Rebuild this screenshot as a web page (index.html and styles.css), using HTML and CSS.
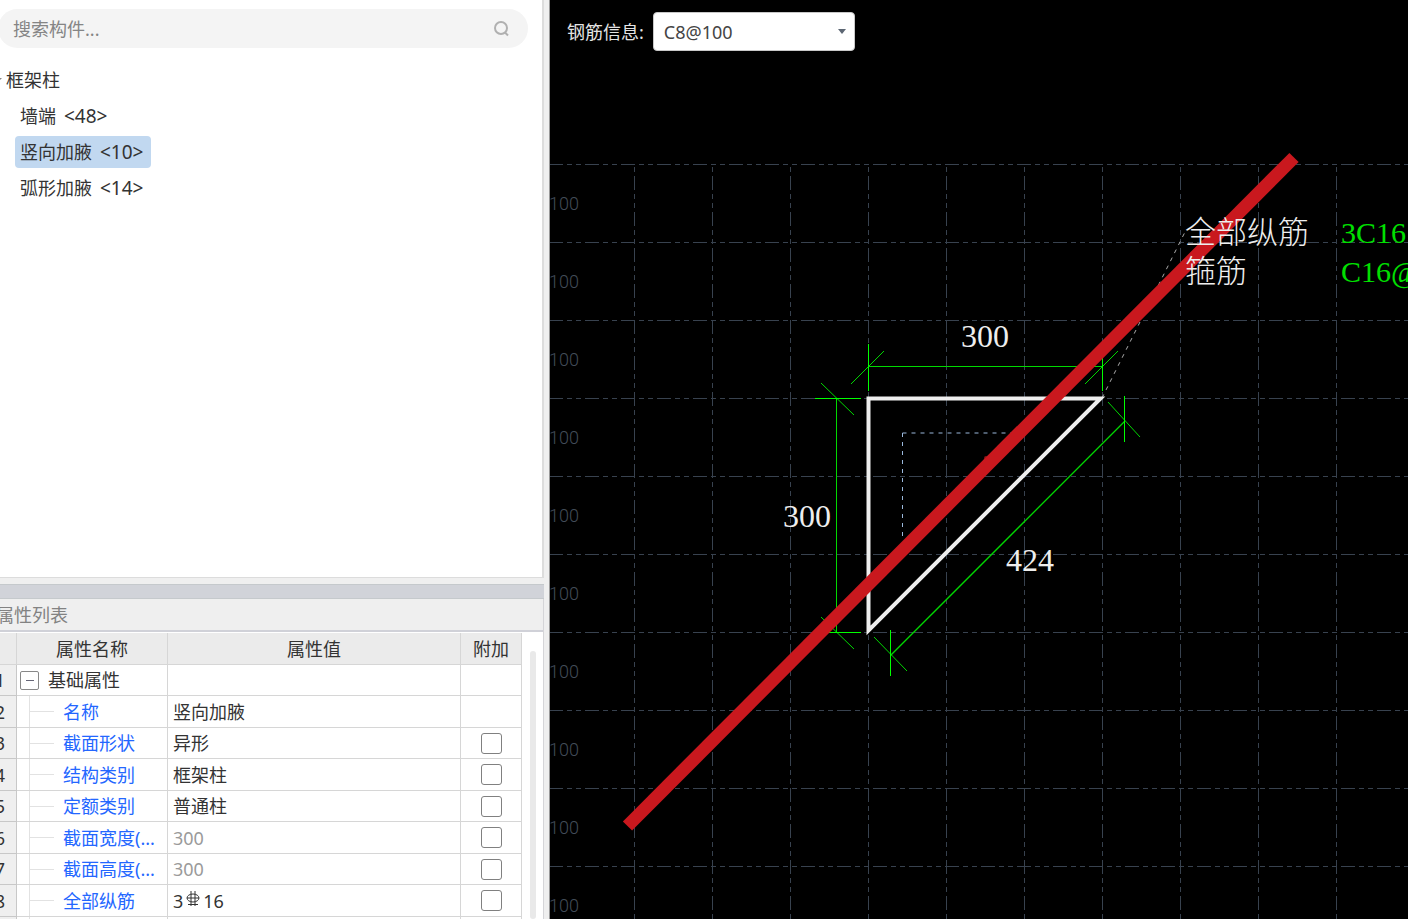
FILE: index.html
```html
<!DOCTYPE html>
<html lang="zh-CN">
<head>
<meta charset="utf-8">
<title>构件属性</title>
<link rel="stylesheet" href="styles.css">
</head>
<body>
<div class="app">
  <aside class="sidebar">
    <section class="components">
      <div class="search">
        <input class="search-input" type="search" placeholder="搜索构件..." aria-label="搜索构件">
        <svg class="search-icon" viewBox="0 0 18 18" aria-hidden="true"><circle cx="8" cy="8" r="6"/><path d="M12 12.500L15 15.500"/></svg>
      </div>
      <ul class="tree">
        <li><button class="node root" type="button"><svg class="arrow" viewBox="0 0 8 8" aria-hidden="true"><path d="M0 2h8L4 6z"/></svg>框架柱</button></li>
        <li><button class="node" type="button">墙端<span class="count">&lt;48&gt;</span></button></li>
        <li><button class="node selected" type="button">竖向加腋<span class="count">&lt;10&gt;</span></button></li>
        <li><button class="node" type="button">弧形加腋<span class="count">&lt;14&gt;</span></button></li>
      </ul>
    </section>
    <div class="splitter"></div>
    <section class="properties">
      <h2 class="title">属性列表</h2>
      <div class="table-area">
        <table class="grid">
          <colgroup><col class="c-num"><col class="c-name"><col class="c-value"><col class="c-extra"></colgroup>
          <thead>
            <tr><th></th><th>属性名称</th><th>属性值</th><th>附加</th></tr>
          </thead>
          <tbody>
            <tr><th>1</th><td class="group"><div class="group-head"><button class="toggle" type="button" aria-label="折叠"></button>基础属性</div></td><td></td><td></td></tr>
            <tr><th>2</th><td class="name">名称</td><td>竖向加腋</td><td></td></tr>
            <tr><th>3</th><td class="name">截面形状</td><td>异形</td><td class="extra"><input class="check" type="checkbox" aria-label="截面形状 附加"></td></tr>
            <tr><th>4</th><td class="name">结构类别</td><td>框架柱</td><td class="extra"><input class="check" type="checkbox" aria-label="结构类别 附加"></td></tr>
            <tr><th>5</th><td class="name">定额类别</td><td>普通柱</td><td class="extra"><input class="check" type="checkbox" aria-label="定额类别 附加"></td></tr>
            <tr><th>6</th><td class="name">截面宽度(...</td><td class="muted">300</td><td class="extra"><input class="check" type="checkbox" aria-label="截面宽度 附加"></td></tr>
            <tr><th>7</th><td class="name">截面高度(...</td><td class="muted">300</td><td class="extra"><input class="check" type="checkbox" aria-label="截面高度 附加"></td></tr>
            <tr><th>8</th><td class="name">全部纵筋</td><td><div class="rebar">3<svg class="rebar-icon" viewBox="0 0 14 16" role="img" aria-label="三级钢"><path d="M5 0v15M9 0v15M2 13.500h10"/><ellipse cx="7" cy="7" rx="6" ry="4"/><path d="M1 7h12"/></svg>16</div></td><td class="extra"><input class="check" type="checkbox" aria-label="全部纵筋 附加"></td></tr>
            <tr><th></th><td class="name"></td><td></td><td></td></tr>
          </tbody>
        </table>
        <div class="scrollbar"></div>
      </div>
    </section>
  </aside>
  <main class="canvas">
    <svg class="drawing" viewBox="550 0 858 919" preserveAspectRatio="xMinYMin slice" role="img" aria-label="竖向加腋截面图">
      <path class="grid-line" d="M549 164.500H1420M549 242.500H1420M549 320.500H1420M549 398.500H1420M549 476.500H1420M549 554.500H1420M549 632.500H1420M549 710.500H1420M549 788.500H1420M549 866.500H1420"/>
      <path class="grid-line vertical" d="M634.500 164V930M712.500 164V930M790.500 164V930M868.500 164V930M946.500 164V930M1024.500 164V930M1102.500 164V930M1180.500 164V930M1258.500 164V930M1336.500 164V930"/>
      <g class="grid-label">
        <text x="549" y="210">100</text><text x="549" y="288">100</text><text x="549" y="366">100</text><text x="549" y="444">100</text><text x="549" y="522">100</text>
        <text x="549" y="600">100</text><text x="549" y="678">100</text><text x="549" y="756">100</text><text x="549" y="834">100</text><text x="549" y="912">100</text>
      </g>
      <path class="leader" d="M1102 398L1185 232"/>
      <path class="stirrup" d="M902.500 433V538M902.500 433H1014"/>
      <path class="outline" d="M868.500 398.500H1100.500L868.500 630.500Z"/>
      <g class="dimension">
        <path d="M868 366.500H1102M836.500 398V632"/>
        <path class="slope" d="M1124.500 421.500L890.500 655.500"/>
        <path d="M851 384L884 351M1085 384L1118 351M821 383L854 415M821 617L854 649M1108 402L1140 437M874 637L907 671"/>
        <path class="tick" d="M868.500 344V391M1102.500 344V391M815 398.500H861M815 632.500H861M1124.500 396V442M890.500 630V676"/>
      </g>
      <circle class="bar" cx="986" cy="458" r="2"/>
      <path class="strike" d="M627.500 826L1294 157.500"/>
      <g class="dim-text">
        <text x="961" y="347">300</text><text x="783" y="527">300</text><text x="1006" y="571">424</text>
      </g>
      <g class="note">
        <text x="1185" y="243">全部纵筋</text><text x="1185" y="282">箍筋</text>
      </g>
      <g class="dim-text value">
        <text x="1341" y="243">3C16</text><text x="1341" y="282">C16@</text>
      </g>
    </svg>
    <div class="toolbar">
      <label for="rebar">钢筋信息:</label>
      <div class="combo">
        <select class="combo-select" id="rebar"><option>C8@100</option></select>
        <svg class="combo-arrow" viewBox="0 0 8 5" aria-hidden="true"><path d="M0 0h8L4 5z"/></svg>
      </div>
    </div>
  </main>
</div>
</body>
</html>
```
FILE: styles.css
```css
* { box-sizing: border-box; }
body {
  margin: 0;
  overflow: hidden;
  font: 18px/24px "Noto Sans", "Noto Sans CJK SC", sans-serif;
  color: #333;
}
button, input, select { font: inherit; color: inherit; }
.app { display: flex; height: 100vh; background: #efefef; }

/* The sidebar is scrolled slightly past its left edge. */
.sidebar {
  flex: 0 0 566px;
  margin-left: -16px;
  padding-right: 5px;
  border-right: 1px solid #999;
  display: flex;
  flex-direction: column;
}
.components {
  flex: 0 0 578px;
  padding: 9px 14px;
  background: #fff;
  border: solid #dcdcdc;
  border-width: 0 2px 1px 0;
}
.search {
  display: flex;
  align-items: center;
  height: 39px;
  padding: 0 17px 0 15px;
  border-radius: 20px;
  background: #f4f4f4;
}
.search-input {
  flex: 1;
  min-width: 0;
  padding: 0;
  border: 0;
  outline: 0;
  background: none;
}
.search-input::placeholder { color: #858585; opacity: 1; }
.search-icon { width: 18px; height: 18px; fill: none; stroke: #b0b0b0; stroke-width: 2; }
.tree {
  list-style: none;
  margin: 16px 0 0;
  padding: 0;
  display: grid;
  gap: 4px;
}
.node {
  display: flex;
  align-items: center;
  height: 32px;
  margin-left: 17px;
  padding: 0 5px;
  border: 0;
  border-radius: 4px;
  background: none;
}
.root { margin-left: 0; padding: 0; gap: 4px; }
.arrow { width: 8px; height: 8px; margin-left: -4px; fill: #888; }
.selected { background: #c1d8f0; padding-right: 8px; }
.count { margin-left: 8px; font-size: 19px; }

.splitter {
  flex: 0 0 15px;
  margin-top: 6px;
  background: #d1d3d9;
  border: solid #c5c9cc;
  border-width: 1px 0;
}
.properties { flex: 1; min-height: 0; display: flex; flex-direction: column; border-right: 1px solid #d5d5d8; }
.title {
  margin: 0;
  padding: 4px 12px;
  height: 33px;
  border-bottom: 2px solid #d0d1d8;
  font-size: 18px;
  font-weight: 400;
  color: #828282;
}
.table-area {
  flex: 1;
  min-height: 0;
  overflow: hidden;
  display: flex;
  padding: 1px 7px 0 0;
  background: #fff;
}
.grid { flex: 1; table-layout: fixed; border-collapse: separate; border-spacing: 0; align-self: flex-start; }
.c-num { width: 33px; }
.c-name { width: 151px; }
.c-extra { width: 61px; }
.grid th, .grid td {
  padding: 0;
  border: solid #d6d6d6;
  border-width: 0 1px 1px 0;
  font-weight: 400;
  white-space: nowrap;
}
.grid th { background: #ebebeb; text-align: center; }
.grid tbody th { border-color: #c8c8c8; background: #efefef; }
.grid tr { height: 31px; }
.grid thead tr, .grid tbody tr:nth-child(even) { height: 32px; }
.grid tbody td { padding-left: 5px; }
.grid tbody .group { padding-left: 3px; }
.group-head { display: flex; align-items: center; gap: 9px; height: 30px; }
.toggle {
  width: 19px;
  height: 19px;
  padding: 0;
  border: 1px solid #888;
  border-radius: 2px;
  background: linear-gradient(#667, #667) center / 8px 1px no-repeat #fff;
}
.grid tbody .name {
  padding-left: 46px;
  color: #2467ff;
  background:
    linear-gradient(#e2e2e2, #e2e2e2) 12px 0 / 1px 100% no-repeat,
    linear-gradient(#e2e2e2, #e2e2e2) 13px 50% / 24px 1px no-repeat;
}
.muted { color: #9a9a9a; }
.rebar { display: flex; align-items: center; gap: 3px; height: 28px; }
.rebar-icon { width: 14px; height: 16px; margin-bottom: 4px; fill: none; stroke: #333; }
.grid tbody .extra { padding: 0; }
.check {
  appearance: none;
  display: block;
  width: 21px;
  height: 21px;
  margin: 0 auto;
  border: 1px solid #808080;
  border-radius: 3px;
  background: #fff;
}
.scrollbar { width: 6px; margin: 18px 0 0 8px; border-radius: 3px; background: #e9e9e9; }

.canvas { flex: 1; min-width: 0; display: grid; grid-template: 100% / 100%; background: #000; }
.drawing, .toolbar { grid-area: 1 / 1; }
.drawing { width: 100%; height: 100%; }
.toolbar {
  align-self: start;
  display: flex;
  align-items: center;
  gap: 9px;
  padding: 12px 17px;
  color: #e4e4e4;
}
.combo { display: grid; align-items: center; width: 202px; }
.combo-select {
  grid-area: 1 / 1;
  appearance: none;
  height: 39px;
  padding: 0 10px;
  border: 1px solid #c8c8c8;
  border-radius: 4px;
  background: #fff;
  color: #444;
}
.combo-arrow { grid-area: 1 / 1; justify-self: end; width: 8px; height: 5px; margin-right: 9px; fill: #5c6673; pointer-events: none; }

.grid-line { fill: none; stroke: #38424f; stroke-dasharray: 14 4 5 4 5 4; }
.vertical { stroke-dashoffset: 24; }
.grid-label { font: 300 18px Roboto, sans-serif; fill: #424c58; }
.leader { stroke: #aaa; stroke-dasharray: 4 5; }
.stirrup { fill: none; stroke: #9ab8dc; stroke-dasharray: 4 5; }
.outline { fill: none; stroke: #eee; stroke-width: 4; }
.dimension { fill: none; stroke: #00d800; }
.dimension .slope { stroke: #00d800; stroke-width: 1.3; }
.tick { stroke: #00ff00; }
.bar { fill: #801418; }
.strike { stroke: #c9181e; stroke-width: 13; }
.dim-text { font: 32px "Liberation Serif", serif; fill: #eee; }
.note { font: 300 31px "Noto Sans CJK SC", sans-serif; fill: #eee; }
.value { font-size: 30px; fill: #00e000; }
```
